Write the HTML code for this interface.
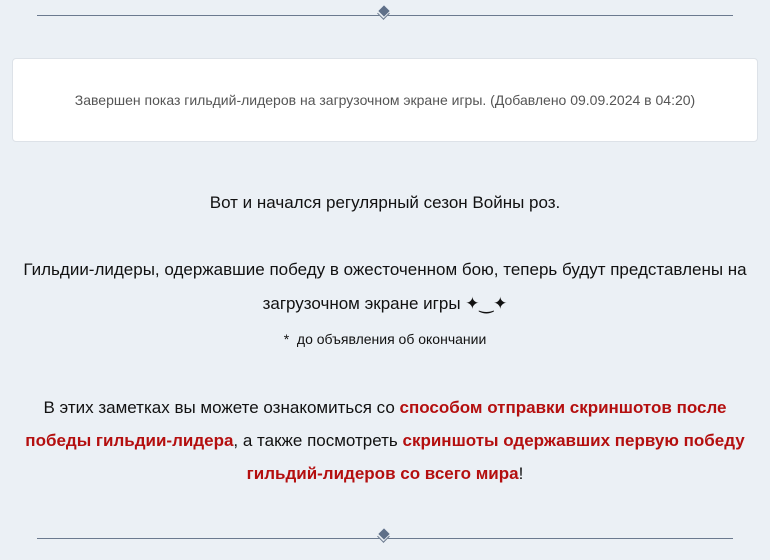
<!DOCTYPE html>
<html><head><meta charset="utf-8"><style>
body{margin:0;width:770px;height:560px;background:#ebf0f5;font-family:"Liberation Sans",sans-serif;position:relative;overflow:hidden}
.div{position:absolute;left:37px;width:696px;height:1px;background:#6b7a8f}
.d{position:absolute;width:8px;height:8px;background:#5f7089;transform:rotate(45deg)}
.c{position:absolute;left:379px;width:8px;height:8px;border-right:1px solid #6b7a8f;border-bottom:1px solid #6b7a8f;transform:rotate(45deg);background:#ebf0f5}
.card{position:absolute;left:12px;top:58px;width:744px;height:82px;background:#fff;border:1px solid #dde2e8;border-radius:4px;text-align:center;font-size:14px;color:#555;line-height:82px}
.t{position:absolute;left:0;width:770px;text-align:center;font-size:17px;color:#111;white-space:nowrap}
b{color:#b40f0f}
</style></head><body>
<div class="div" style="top:15px"></div><div class="c" style="top:9px"></div><div class="d" style="left:380px;top:7px"></div>
<div class="card">Завершен показ гильдий-лидеров на загрузочном экране игры. (Добавлено 09.09.2024 в 04:20)</div>
<div class="t" style="top:193px">Вот и начался регулярный сезон Войны роз.</div>
<div class="t" style="top:253px;line-height:34px">Гильдии-лидеры, одержавшие победу в ожесточенном бою, теперь будут представлены на<br>загрузочном экране игры ✦‿✦</div>
<div class="t" style="top:331px;font-size:14px">*&nbsp; до объявления об окончании</div>
<div class="t" style="top:391px;line-height:33px">В этих заметках вы можете ознакомиться со <b>способом отправки скриншотов после</b><br><b>победы гильдии-лидера</b>, а также посмотреть <b>скриншоты одержавших первую победу</b><br><b>гильдий-лидеров со всего мира</b>!</div>
<div class="div" style="top:538px"></div><div class="c" style="top:532px"></div><div class="d" style="left:380px;top:530px"></div>
</body></html>
